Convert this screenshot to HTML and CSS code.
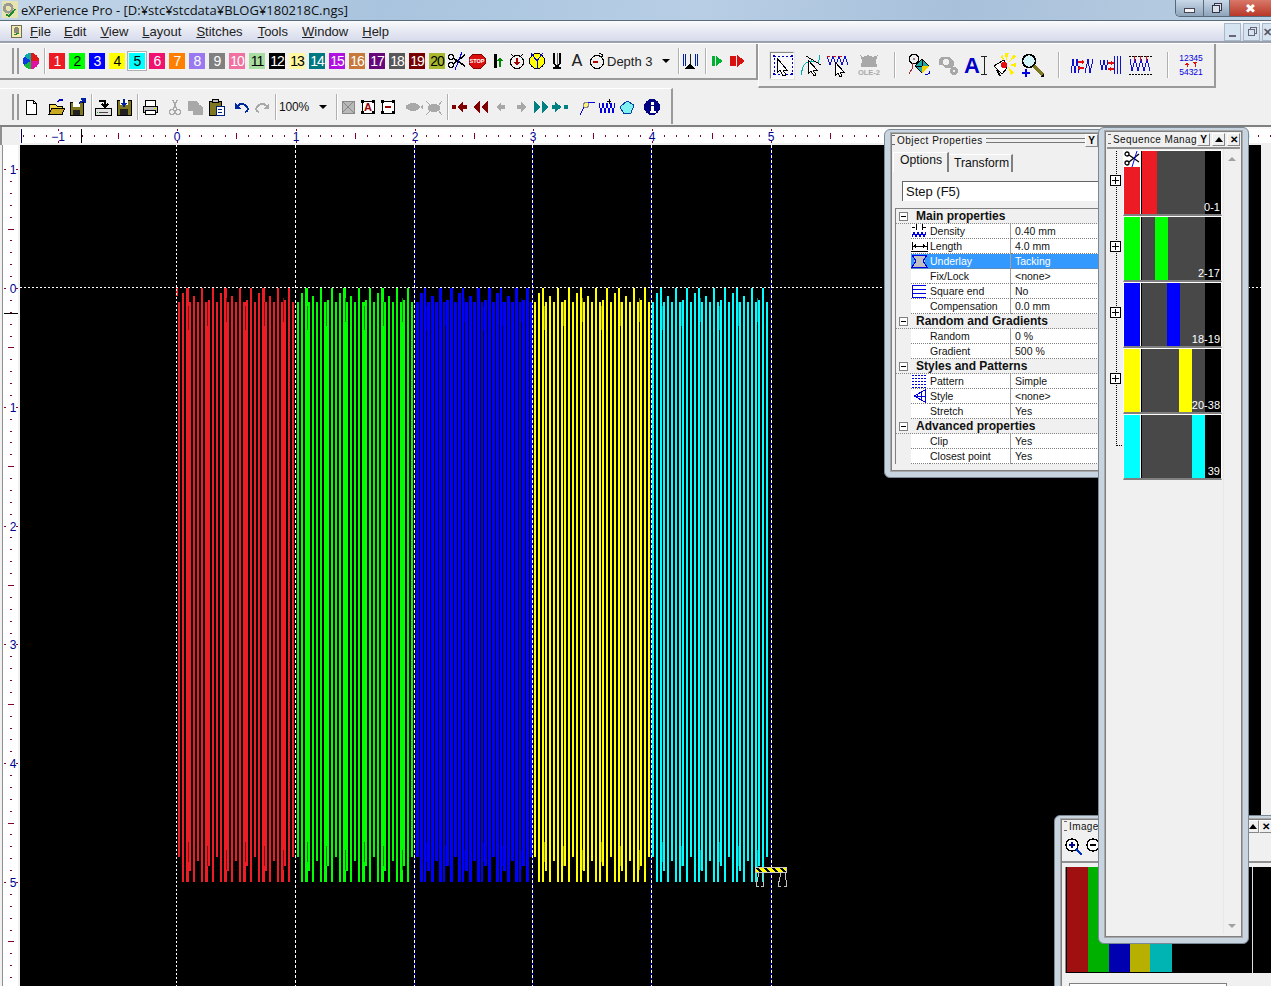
FILE: index.html
```html
<!DOCTYPE html>
<html lang="en">
<head>
<meta charset="utf-8">
<title>eXPerience Pro</title>
<link rel="stylesheet" href="styles.css">
</head>
<body>
<div class="app">
  <header class="titlebar">
    <svg class="ic title-ic" viewBox="0 0 20 20"><rect x="1" y="0" width="18" height="19" fill="#e8e4b0"/><circle cx="8" cy="8" r="6" fill="#9a9a90"/><circle cx="8" cy="8" r="3" fill="#e8e4b0"/><path d="M6 15l3 2 7-8" fill="none" stroke="#1a8a30" stroke-width="2"/></svg>
    <span class="title-text">eXPerience Pro - [D:¥stc¥stcdata¥BLOG¥180218C.ngs]</span>
    <div class="caption">
      <div class="cap cap-min"><span class="glyph-min"></span></div>
      <div class="cap cap-max"><span class="glyph-max"></span></div>
      <div class="cap cap-close">✖</div>
    </div>
  </header>
  <nav class="menubar">
    <svg class="ic menu-ic" viewBox="0 0 20 20"><rect x="3" y="2" width="14" height="17" fill="#f4eca8" stroke="#444"/><circle cx="10" cy="9" r="4" fill="#8a8a80"/><path d="M7 15l6-2" stroke="#1a8a30" stroke-width="2"/></svg>
    <span class="menu-item menu-first"><u>F</u>ile</span>
    <span class="menu-item"><u>E</u>dit</span>
    <span class="menu-item"><u>V</u>iew</span>
    <span class="menu-item menu-wide"><u>L</u>ayout</span>
    <span class="menu-item menu-wide"><u>S</u>titches</span>
    <span class="menu-item"><u>T</u>ools</span>
    <span class="menu-item"><u>W</u>indow</span>
    <span class="menu-item"><u>H</u>elp</span>
    <div class="mdi">
      <div class="mdi-btn"><span class="mdi-min"></span></div>
      <div class="mdi-btn"><span class="mdi-res"></span></div>
      <div class="mdi-btn mdi-cut">✕</div>
    </div>
  </nav>
  <section class="toolarea">
    <div class="toolcol">
      <div class="toolbar tb1">
        <span class="grip"></span>
        <svg class="ic m2" viewBox="0 0 20 20"><circle cx="10" cy="10" r="8" fill="#0a3ae0"/><path d="M10 10V2A8 8 0 0 1 18 10Z" fill="#e01818"/><path d="M10 10H18A8 8 0 0 1 10 18Z" fill="#e010a0"/><path d="M10 10V18A8 8 0 0 1 3 14Z" fill="#18b838"/><path d="M10 10L3 5A8 8 0 0 1 10 2Z" fill="#10a8a8"/></svg>
        <span class="sep m3"></span>
        <div class="swatches">
          <span class="sw s1">1</span><span class="sw s2">2</span><span class="sw s3">3</span><span class="sw s4">4</span><span class="sw s5">5</span><span class="sw s6">6</span><span class="sw s7">7</span><span class="sw s8">8</span><span class="sw s9">9</span><span class="sw s10">10</span><span class="sw s11">11</span><span class="sw s12">12</span><span class="sw s13">13</span><span class="sw s14">14</span><span class="sw s15">15</span><span class="sw s16">16</span><span class="sw s17">17</span><span class="sw s18">18</span><span class="sw s19">19</span><span class="sw s20">20</span>
        </div>
        <svg class="ic m2" viewBox="0 0 20 20"><g fill="none" stroke="#000" stroke-width="1.5"><circle cx="4" cy="6" r="2.5"/><circle cx="4" cy="14" r="2.5"/><path d="M6 7l12 8M6 13L18 4"/></g><path d="M15 1L8 19" stroke="#00f"/></svg>
        <svg class="ic" viewBox="0 0 20 20"><path d="M6 3h8l4 4v6l-4 4H6l-4-4V7z" fill="#d81010" stroke="#800"/><text x="10" y="12" class="stop-t">STOP</text></svg>
        <svg class="ic" viewBox="0 0 20 20"><path d="M8 3v14" stroke="#000" stroke-width="3"/><path d="M13 9v7" stroke="#080" stroke-width="2"/><path d="M10 10l3-4 3 4z" fill="#080"/></svg>
        <svg class="ic" viewBox="0 0 20 20"><circle cx="10" cy="11" r="6.5" fill="#f0f0f0" stroke="#000"/><path d="M10 7v5" stroke="#a00000" stroke-width="2"/><path d="M7 11h6l-3 4z" fill="#a00000"/><path d="M4 3l2 2M16 3l-2 2" stroke="#000"/></svg>
        <svg class="ic" viewBox="0 0 20 20"><circle cx="10" cy="10" r="7.5" fill="#ffff00" stroke="#000"/><path d="M4 2l6 8 6-8M10 10v8" fill="none" stroke="#0000e0"/></svg>
        <svg class="ic" viewBox="0 0 20 20"><path d="M7 2v10l2 3h2l2-3V2" fill="none" stroke="#000" stroke-width="1.5"/><path d="M10 2v12" stroke="#666"/><path d="M6 17h8" stroke="#000" stroke-width="2"/></svg>
        <svg class="ic" viewBox="0 0 20 20"><text x="10" y="15" class="a-t">A</text></svg>
        <svg class="ic" viewBox="0 0 20 20"><circle cx="10" cy="11" r="6.5" fill="#f0f0f0" stroke="#000"/><path d="M6 11h5" stroke="#b00000" stroke-width="2"/><path d="M12 2l4 2-2 3" fill="none" stroke="#000"/></svg>
        <span class="depth">Depth 3</span>
        <span class="caret m10"></span>
        <span class="sep m8"></span>
        <svg class="ic" viewBox="0 0 20 20"><path d="M3 3v12M5 3v12M15 3v12M17 3v12" stroke="#0020a0"/><path d="M10 3v10" stroke="#222"/><path d="M5 18l5-6 5 6z" fill="#000"/></svg>
        <span class="sep m5"></span>
        <svg class="ic" viewBox="0 0 20 20"><path d="M5 5h3v10H5z" fill="#00b030"/><path d="M9 5l7 5-7 5z" fill="#00b030"/></svg>
        <svg class="ic" viewBox="0 0 20 20"><path d="M3 5h6v10H3z" fill="#d81010"/><path d="M10 4l8 6-8 6z" fill="#d81010"/></svg>
      </div>
      <div class="toolbar tb2">
        <span class="grip"></span>
        <svg class="ic m2" viewBox="0 0 20 20"><path d="M5 3h7l3 3v11H5z" fill="#fff" stroke="#000"/><path d="M12 3v3h3" fill="none" stroke="#000"/></svg>
        <svg class="ic m6" viewBox="0 0 20 20"><path d="M2 7h6l2 2h5v8H2z" fill="#f0d850" stroke="#000"/><path d="M2 17l3-6h13l-3 6z" fill="#c8a820" stroke="#000"/><path d="M10 5q3-3 6-2" fill="none" stroke="#0000c0" stroke-width="1.5"/></svg>
        <svg class="ic" viewBox="0 0 20 20"><path d="M3 5h13v13H3z" fill="#807820" stroke="#000"/><rect x="6" y="5" width="7" height="5" fill="#fff"/><rect x="6" y="13" width="7" height="5" fill="#202020"/><path d="M12 6l6-3M14 2h4v4" fill="none" stroke="#0020a0" stroke-width="1.5"/></svg>
        <span class="sep m4"></span>
        <svg class="ic" viewBox="0 0 20 20"><rect x="2" y="11" width="16" height="7" fill="#e0e0e0" stroke="#000"/><path d="M6 15h9" stroke="#444"/><path d="M4 15h1" stroke="#0a0"/><path d="M6 4h6v5M9 7l3 3 3-3" fill="none" stroke="#000" stroke-width="1.5"/></svg>
        <svg class="ic m1" viewBox="0 0 20 20"><path d="M3 3h14v15H3z" fill="#807820" stroke="#000"/><rect x="6" y="3" width="8" height="5" fill="#fff"/><rect x="6" y="12" width="8" height="6" fill="#202020"/><path d="M10 2v6M8 6l2 3 2-3" fill="none" stroke="#0020a0" stroke-width="1.5"/></svg>
        <span class="sep m3"></span>
        <svg class="ic m1" viewBox="0 0 20 20"><path d="M5 3h10v6H5z" fill="#fff" stroke="#000"/><path d="M3 9h14v6H3z" fill="#c0c0c0" stroke="#000"/><path d="M5 13h10v4H5z" fill="#fff" stroke="#000"/><path d="M14 11h2" stroke="#dd0"/></svg>
        <svg class="ic m5" viewBox="0 0 20 20"><g fill="none" stroke="#a8a8a8" stroke-width="1.5"><circle cx="7" cy="15" r="2.5"/><circle cx="13" cy="15" r="2.5"/><path d="M8 13L12 3M12 13L8 3"/></g></svg>
        <svg class="ic" viewBox="0 0 20 20"><path d="M3 4h8l3 3v7H3z" fill="#a8a8a8"/><path d="M8 8h7l3 3v7H8z" fill="#a8a8a8"/></svg>
        <svg class="ic m1" viewBox="0 0 20 20"><rect x="3" y="4" width="12" height="14" fill="#807820" stroke="#000"/><rect x="6" y="2" width="6" height="3" fill="#c0c0c0" stroke="#000"/><path d="M10 9h8v9h-8z" fill="#fff" stroke="#002080"/><path d="M12 12h4M12 15h4" stroke="#002080"/></svg>
        <svg class="ic m6" viewBox="0 0 20 20"><path d="M5 9q5-4 9 0t-1 6" fill="none" stroke="#0028a0" stroke-width="2"/><path d="M3 6v6h6z" fill="#0028a0"/></svg>
        <svg class="ic" viewBox="0 0 20 20"><path d="M15 9q-5-4-9 0t1 6" fill="none" stroke="#a8a8a8" stroke-width="2"/><path d="M17 6v6h-6z" fill="#a8a8a8"/></svg>
        <span class="sep m3"></span>
        <span class="zoomtxt">100%</span>
        <span class="caret m12"></span>
        <span class="sep m9"></span>
        <svg class="ic" viewBox="0 0 20 20"><rect x="4" y="4" width="12" height="12" fill="#b8b8b8" stroke="#888"/><path d="M4 4l12 12M16 4L4 16" stroke="#888"/></svg>
        <svg class="ic" viewBox="0 0 20 20"><rect x="4" y="4" width="12" height="12" fill="#fff" stroke="#000"/><path d="M3 3h3v3H3zM14 3h3v3h-3zM3 14h3v3H3zM14 14h3v3h-3z"/><text x="10" y="14" class="ra-t">A</text></svg>
        <svg class="ic" viewBox="0 0 20 20"><rect x="4" y="4" width="12" height="12" fill="#fff" stroke="#000"/><path d="M3 3h3v3H3zM14 3h3v3h-3zM3 14h3v3H3zM14 14h3v3h-3z"/><path d="M7 10h6" stroke="#900" stroke-width="2"/></svg>
        <svg class="ic m6" viewBox="0 0 20 20"><ellipse cx="9" cy="10" rx="7" ry="4" fill="#a8a8a8"/><path d="M16 10l3-2v4z" fill="#a8a8a8"/></svg>
        <svg class="ic" viewBox="0 0 20 20"><ellipse cx="10" cy="11" rx="6" ry="4" fill="#a8a8a8"/><path d="M2 4l5 5M18 4l-4 5M2 18l5-5M18 18l-4-5" stroke="#a8a8a8"/></svg>
        <span class="sep m3"></span>
        <svg class="ic m1" viewBox="0 0 20 20"><circle cx="4" cy="10" r="2.5" fill="#800000"/><path d="M7 10l6-5v3h4v4h-4v3z" fill="#800000"/></svg>
        <svg class="ic m1" viewBox="0 0 20 20"><path d="M2 10l7-6v12zM10 10l7-6v12z" fill="#800000"/></svg>
        <svg class="ic" viewBox="0 0 20 20"><path d="M5 10l5-5v3h4v4h-4v3z" fill="#a8a8a8"/></svg>
        <svg class="ic" viewBox="0 0 20 20"><path d="M15 10l-5-5v3H6v4h4v3z" fill="#a8a8a8"/></svg>
        <svg class="ic" viewBox="0 0 20 20"><path d="M3 4l7 6-7 6zM11 4l7 6-7 6z" fill="#008080"/></svg>
        <svg class="ic" viewBox="0 0 20 20"><path d="M1 8h3V5l7 5-7 5v-3H1z" fill="#008080"/><circle cx="15" cy="10" r="2.5" fill="#008080"/></svg>
        <svg class="ic m6" viewBox="0 0 20 20"><path d="M3 18l4-8M11 6l7-1" stroke="#0000e0"/><circle cx="9" cy="8" r="2.5" fill="#fff080" stroke="#888"/></svg>
        <svg class="ic" viewBox="0 0 20 20"><path d="M2 6l2 10 2-10 2 10 2-10 2 10 2-10 2 10 2-10" fill="none" stroke="#0000e0"/><path d="M12 2v5M10 4h4" stroke="#000"/></svg>
        <svg class="ic" viewBox="0 0 20 20"><path d="M3 10l7-6 7 4-3 8-7 1z" fill="#80f0f0" stroke="#0040a0"/></svg>
        <svg class="ic m5" viewBox="0 0 20 20"><circle cx="10" cy="10" r="8" fill="#000080"/><rect x="9" y="8.5" width="3" height="6" fill="#fff"/><rect x="9" y="4.5" width="3" height="3" fill="#fff"/><rect x="7.5" y="14" width="6" height="1.5" fill="#fff"/></svg>
      </div>
    </div>
    <div class="toolbar tb3">
      <div class="tool-active">
        <svg class="ic24" viewBox="0 0 24 24"><rect x="3" y="3" width="18" height="18" fill="#f8f8f8" stroke="#0000c0" stroke-dasharray="2 2"/><path d="M2 2h2v2H2zM20 2h2v2h-2zM2 20h2v2H2zM20 20h2v2h-2z" fill="#0000c0"/><path d="M6 5v15l3-3 3 6 3-1-3-5h4z" fill="#fff" stroke="#000"/></svg>
      </div>
      <svg class="ic24 m6" viewBox="0 0 24 24"><path d="M2 22q-1-8 4-12t12 0q2-4 2-8" fill="none" stroke="#00b0b0"/><path d="M6 3L21 12" stroke="#000"/><path d="M8 7v14l3-3 3 5 2-1-3-5h4z" fill="#fff" stroke="#000"/></svg>
      <svg class="ic24 m2" viewBox="0 0 24 24"><path d="M1 3l3 9 3-9 3 9 3-9 3 9 3-9 3 9" fill="none" stroke="#1010d0"/><path d="M1 3h3M7 3h3M13 3h3" stroke="#d01010"/><path d="M9 9v14l3-3 2 4 2-1-2-4h4z" fill="#fff" stroke="#000"/></svg>
      <svg class="ic24 m7" viewBox="0 0 24 24"><path d="M3 2l3 2 5-2 5 2 5-2-2 5 1 7H4l1-7z" fill="#a8a8a8"/><text x="12" y="22" class="ole-t">OLE-2</text></svg>
      <span class="sep m13"></span>
      <svg class="ic24 m12" viewBox="0 0 24 24"><circle cx="6" cy="6" r="4.5" fill="#eee" stroke="#000" stroke-width="1.5"/><circle cx="6" cy="6" r="1.5" fill="#888"/><path d="M4 10v6l-3 5" fill="none" stroke="#a03030"/><path d="M14 6l7 7-7 7-7-7z" fill="#20a8a8" stroke="#000"/><path d="M14 6v14M7 13h14" stroke="#000"/><path d="M14 13h7l-7 7z" fill="#f0d000"/><path d="M17 21q5 1 5-3" fill="none" stroke="#0000d0"/></svg>
      <svg class="ic24 m4" viewBox="0 0 24 24"><path d="M5 4h9l2 3 2 1v4l-3 3H9l-3-3H3V7z" fill="#a8a8a8"/><circle cx="10" cy="9" r="3" fill="#f0f0f0"/><circle cx="18" cy="18" r="4" fill="#a8a8a8"/><circle cx="18" cy="18" r="1.5" fill="#f0f0f0"/></svg>
      <svg class="ic24 m4" viewBox="0 0 24 24"><text x="8" y="20" class="ai-a">A</text><path d="M17 3h6M20 3v18M17 21h6" stroke="#222" fill="none"/></svg>
      <svg class="ic24 m4" viewBox="0 0 24 24"><path d="M13 0l4 0-3 8zM22 1l2 3-7 5zM24 10v4l-7-2zM22 20l-3 2-3-8zM8 4l3-2 1 6z" fill="#ffee00"/><path d="M2 13l10-6 3 8-5 6z" fill="#fff" stroke="#000"/><circle cx="12" cy="12" r="3" fill="#e81010"/><path d="M5 17l3 6" stroke="#000" stroke-width="2"/></svg>
      <svg class="ic24 m4" viewBox="0 0 24 24"><circle cx="9" cy="8" r="6.5" fill="#d0f4f8" stroke="#000" stroke-width="1.5"/><path d="M14 13l9 9" stroke="#807820" stroke-width="3"/><path d="M20 24l4-4v4z"/><path d="M2 20h8M6 16v8" stroke="#0000e0" stroke-width="2"/></svg>
      <span class="sep m14"></span>
      <svg class="ic24 m10" viewBox="0 0 24 24"><path d="M1 20l2-14 2 14 2-14 2 14M15 20l3-14 2 14 3-14" fill="none" stroke="#1010d0"/><path d="M8 9h6M14 15H8" stroke="#e01010" stroke-width="1.5"/><path d="M12 7l3 2-3 2zM10 13l-3 2 3 2z" fill="#e01010"/></svg>
      <svg class="ic24 m5" viewBox="0 0 24 24"><path d="M1 7l2 10 2-10 2 10 2-10M15 3v18M18 3v18M21 3v18" fill="none" stroke="#1010d0"/><path d="M9 10h6M15 16H9" stroke="#e01010" stroke-width="1.5"/><path d="M12 8l3 2-3 2zM12 14l-3 2 3 2z" fill="#e01010"/></svg>
      <svg class="ic24 m5" viewBox="0 0 24 24"><path d="M1 3h23M1 21h23" stroke="#000" stroke-dasharray="2 1"/><path d="M2 6l2 12 3-12 3 12 3-12 3 12 3-12 3 12" fill="none" stroke="#1010d0"/><path d="M6 3v5M12 3v5M18 3v5" stroke="#e01010"/></svg>
      <span class="sep m15"></span>
      <svg class="ic24 m10" viewBox="0 0 24 24"><text x="12" y="8" class="num-t">12345</text><text x="12" y="22" class="num-t">54321</text><path d="M8 9l2 3H6zM16 12l2-3h-4z" fill="#e01010"/><path d="M8 11v3M16 10v4" stroke="#e01010"/></svg>
    </div>
  </section>
  <section class="ruler-row">
    <div class="ruler-corner"></div>
    <svg class="ruler-h" id="rulerH" viewBox="20 127 1251 18"></svg>
  </section>
  <main class="work">
    <svg class="ruler-v" id="rulerV" viewBox="0 145 20 841"></svg>
    <svg class="canvas" id="canvas" viewBox="20 145 1251 841"></svg>
  </main>

  <aside class="sidebar-strip"></aside>

  <aside class="win win-image">
    <div class="win-in">
      <div class="wt">
        <span class="wt-grip"></span><span class="wt-text">Image M</span>
        <span class="wt-btn wt-up"></span><span class="wt-btn wt-x">✕</span>
      </div>
      <div class="img-tools">
        <svg class="ic" viewBox="0 0 20 20"><circle cx="8" cy="8" r="6" fill="#fff" stroke="#000" stroke-width="1.4"/><path d="M5 8h6M8 5v6" stroke="#000090" stroke-width="1.4"/><path d="M12 12l6 6" stroke="#0030c0" stroke-width="2.4"/></svg>
        <svg class="ic" viewBox="0 0 20 20"><circle cx="8" cy="8" r="6" fill="#fff" stroke="#000" stroke-width="1.4"/><path d="M5 8h6" stroke="#000" stroke-width="1.4"/></svg>
      </div>
      <div class="img-view">
        <span class="iv iv1"></span><span class="iv iv2"></span><span class="iv iv3"></span><span class="iv iv4"></span><span class="iv iv5"></span>
        <span class="iv-mark"></span>
      </div>
      <div class="img-slider"></div>
    </div>
  </aside>

  <aside class="win win-props">
    <div class="win-in">
      <div class="wt wt-props">
        <span class="wt-grip"></span><span class="wt-text">Object Properties</span><span class="wt-lines"></span>
        <span class="wt-btn wt-pin">Y</span>
      </div>
      <div class="tabs"><span class="tab tab-on">Options</span><span class="tab">Transform</span></div>
      <div class="stepbox">Step (F5)</div>
      <div class="grid">
        <div class="row sec"><span class="minus"></span><b>Main properties</b></div>
        <div class="row"><span class="pi"><svg viewBox="0 0 17 14"><path d="M5 0v6M11 0v6M1 3h3M15 3h-3" stroke="#000"/><path d="M1 13l2-5 2 5 2-5 2 5 2-5 2 5 2-5" fill="none" stroke="#0000e0"/></svg></span><span class="pn">Density</span><span class="pv">0.40 mm</span></div>
        <div class="row"><span class="pi"><svg viewBox="0 0 17 14"><path d="M1 3v8M16 3v8M1 7h15" stroke="#000"/><path d="M2 7l3-2v4zM15 7l-3-2v4z"/><path d="M0 12h17" stroke="#000"/></svg></span><span class="pn">Length</span><span class="pv">4.0 mm</span></div>
        <div class="row row-sel"><span class="pi"><svg viewBox="0 0 17 14"><rect x="3" y="2" width="11" height="10" fill="#a8c8f0"/><path d="M1 1h15L12 7l4 6H1l4-6z" fill="#c0c0c0" stroke="#0000e0"/></svg></span><span class="pn">Underlay</span><span class="pv">Tacking</span></div>
        <div class="row"><span class="pi"></span><span class="pn">Fix/Lock</span><span class="pv">&lt;none&gt;</span></div>
        <div class="row"><span class="pi"><svg viewBox="0 0 17 14"><path d="M1 1h14M1 5h14M1 9h14M1 13h14" stroke="#0000e0"/><path d="M1 1v12" stroke="#0000e0"/></svg></span><span class="pn">Square end</span><span class="pv">No</span></div>
        <div class="row"><span class="pi"></span><span class="pn">Compensation</span><span class="pv">0.0 mm</span></div>
        <div class="row sec"><span class="minus"></span><b>Random and Gradients</b></div>
        <div class="row"><span class="pi"></span><span class="pn">Random</span><span class="pv">0 %</span></div>
        <div class="row"><span class="pi"></span><span class="pn">Gradient</span><span class="pv">500 %</span></div>
        <div class="row sec"><span class="minus"></span><b>Styles and Patterns</b></div>
        <div class="row"><span class="pi"><svg viewBox="0 0 17 14"><path d="M1 1h15M1 4h15M1 7h15M1 10h15M1 13h15" stroke="#0000e0" stroke-dasharray="2 1"/></svg></span><span class="pn">Pattern</span><span class="pv">Simple</span></div>
        <div class="row"><span class="pi"><svg viewBox="0 0 17 14"><path d="M3 7l11-6v12z" fill="#fff" stroke="#0000e0"/><path d="M3 7h11M6 5v4M10 3v8" stroke="#0000e0"/></svg></span><span class="pn">Style</span><span class="pv">&lt;none&gt;</span></div>
        <div class="row"><span class="pi"></span><span class="pn">Stretch</span><span class="pv">Yes</span></div>
        <div class="row sec"><span class="minus"></span><b>Advanced properties</b></div>
        <div class="row"><span class="pi"></span><span class="pn">Clip</span><span class="pv">Yes</span></div>
        <div class="row"><span class="pi"></span><span class="pn">Closest point</span><span class="pv">Yes</span></div>
      </div>
    </div>
  </aside>

  <aside class="win win-seq">
    <div class="win-in">
      <div class="wt wt-seq">
        <span class="wt-grip"></span><span class="wt-text wt-cut">Sequence Manag</span>
        <span class="wt-btn wt-pin">Y</span><span class="wt-btn wt-up"></span><span class="wt-btn wt-x">✕</span>
      </div>
      <div class="seq-body">
        <div class="tree-line"></div>
        <div class="seq-list">
          <div class="seq-row"><span class="plus"></span>
            <div class="thumb"><span class="t-strip tc-r"><span class="t-sc"><svg viewBox="0 0 16 16"><g fill="none" stroke="#000" stroke-width="1.3"><circle cx="3" cy="3" r="2"/><circle cx="3" cy="12" r="2"/><path d="M5 4l10 7M5 11l10-8"/></g><path d="M13 0L8 16" stroke="#00f"/></svg></span></span><span class="t-gap"></span><span class="t-bar tc-r t-b1"></span><span class="t-label">0-1</span></div></div>
          <div class="seq-row"><span class="plus"></span>
            <div class="thumb"><span class="t-strip tc-g"></span><span class="t-gap"></span><span class="t-bar tc-g t-b2"></span><span class="t-label">2-17</span></div></div>
          <div class="seq-row"><span class="plus"></span>
            <div class="thumb"><span class="t-strip tc-b"></span><span class="t-gap"></span><span class="t-bar tc-b t-b3"></span><span class="t-label">18-19</span></div></div>
          <div class="seq-row"><span class="plus"></span>
            <div class="thumb"><span class="t-strip tc-y"></span><span class="t-gap"></span><span class="t-bar tc-y t-b4"></span><span class="t-label">20-38</span></div></div>
          <div class="seq-row"><span class="noplus"></span>
            <div class="thumb"><span class="t-strip tc-c"></span><span class="t-gap"></span><span class="t-bar tc-c t-b5"></span><span class="t-label">39</span></div></div>
        </div>
        <div class="seq-scroll"><span class="arr-up"></span><span class="arr-down"></span></div>
      </div>
    </div>
  </aside>
</div>
<script src="app.js"></script>
</body>
</html>
```
FILE: styles.css
```css
* { box-sizing: border-box; }
html, body { margin: 0; padding: 0; background: #f0f0f0; }
body { width: 1271px; height: 986px; overflow: hidden; font-family: "Liberation Sans", Arial, sans-serif; font-size: 12px; color: #111; }
.app { position: relative; width: 1271px; height: 986px; overflow: hidden; display: flex; flex-direction: column; }
.ic { width: 20px; height: 20px; flex: none; display: block; shape-rendering: crispEdges; }
.ic24 { width: 24px; height: 24px; flex: none; display: block; shape-rendering: crispEdges; }

.titlebar { height: 21px; flex: none; display: flex; align-items: center; background: linear-gradient(100deg, #c4d6e8 0%, #a9c4de 30%, #b7cee5 55%, #a8c0da 75%, #b8cee2 100%); border-bottom: 1px solid #5a6b7a; position: relative; }
.title-ic { width: 18px; height: 18px; margin-left: 1px; }
.title-text { margin-left: 2px; font-size: 13px; font-family: "Open Sans", "Liberation Sans", sans-serif; color: #111; white-space: nowrap; }
.caption { position: absolute; left: 1175px; top: 0; width: 96px; height: 17px; display: flex; border: 1px solid #56687a; border-top: 0; border-right: 0; border-bottom-left-radius: 5px; overflow: hidden; }
.cap { display: flex; align-items: center; justify-content: center; height: 100%; }
.cap-min { width: 28px; background: linear-gradient(#c8d8e8, #8ea4ba); border-right: 1px solid #5a6b7a; }
.cap-max { width: 26px; background: linear-gradient(#c8d8e8, #8ea4ba); border-right: 1px solid #5a6b7a; }
.cap-close { flex: 1; background: linear-gradient(#d87868, #b83828); color: #fff; font-size: 13px; }
.glyph-min { width: 11px; height: 5px; background: #f4f4f4; border: 1px solid #445; margin-top: 5px; }
.glyph-max { width: 8px; height: 8px; margin: 2px 2px 0 0; background: #d8e0e8; border: 1px solid #334; box-shadow: 2px -2px 0 -1px #dde, 2px -2px 0 0 #334; }

.menubar { height: 22px; flex: none; display: flex; align-items: center; gap: 14px; position: relative; padding-left: 9px; background: linear-gradient(#fbfbfd 0%, #eef0f6 30%, #d6dbec 100%); border-bottom: 2px solid #9aa0ac; font-size: 13px; color: #222; }
.menu-ic { width: 15px; height: 16px; margin-right: -8px; }
.menu-item { white-space: nowrap; }
.menu-first { margin-right: -1px; }
.menu-wide { margin-right: 1px; }
.mdi { position: absolute; left: 1224px; top: 2px; display: flex; gap: 2px; }
.mdi-btn { width: 17px; height: 18px; background: #d6e4f2; border: 1px solid #a8b8c8; display: flex; align-items: center; justify-content: center; color: #556; font-size: 11px; font-weight: bold; }
.mdi-min { width: 7px; height: 2px; background: #667; margin-top: 7px; }
.mdi-res { width: 7px; height: 7px; border: 1px solid #667; box-shadow: 2px -2px 0 -1px #d6e4f2, 2px -2px 0 0 #667; }
.mdi-cut { width: 12px; justify-content: flex-start; }

.toolarea { height: 82px; flex: none; display: flex; align-items: flex-start; background: #f0f0f0; border-top: 1px solid #fff; }
.toolcol { width: 758px; flex: none; display: flex; flex-direction: column; gap: 8px; }
.toolbar { display: flex; align-items: center; background: #f0f0f0; padding-left: 12px; }
.tb1 { width: 758px; height: 36px; border-right: 2px solid #9a9a9a; border-bottom: 2px solid #9a9a9a; }
.tb2 { width: 673px; height: 36px; border-right: 2px solid #9a9a9a; border-top: 1px solid #fff; }
.tb3 { width: 458px; height: 44px; padding-left: 11px; border-right: 2px solid #9a9a9a; border-bottom: 2px solid #9a9a9a; border-left: 1px solid #fff; }
.grip { width: 7px; height: 26px; flex: none; border-left: 2px solid #9a9a9a; border-right: 2px solid #9a9a9a; }
.sep { width: 2px; height: 26px; flex: none; background: #b0b0b0; border-right: 1px solid #fff; }
.m1 { margin-left: 1px; } .m2 { margin-left: 2px; } .m3 { margin-left: 3px; } .m4 { margin-left: 4px; } .m5 { margin-left: 5px; } .m6 { margin-left: 6px; } .m7 { margin-left: 7px; } .m8 { margin-left: 8px; } .m9 { margin-left: 9px; } .m10 { margin-left: 10px; } .m12 { margin-left: 12px; } .m13 { margin-left: 13px; } .m14 { margin-left: 14px; } .m15 { margin-left: 15px; }

.swatches { display: flex; gap: 4px; margin-left: 3px; }
.sw { width: 16px; height: 16px; flex: none; font-size: 14px; line-height: 17px; text-align: center; letter-spacing: -1px; color: #fff; }
.s1 { background: #ed1c24; } .s2 { background: #00ff00; color: #000; } .s3 { background: #0000ff; } .s4 { background: #ffff00; color: #000; }
.s5 { background: #00ffff; color: #000; outline: 1px solid #fff; box-shadow: 0 0 0 2px #b0b0b0; }
.s6 { background: #f0106e; } .s7 { background: #ff8000; } .s8 { background: #9a78f0; } .s9 { background: #808080; } .s10 { background: #f070a0; }
.s11 { background: #a8dca0; color: #000; } .s12 { background: #000; } .s13 { background: #fff8a0; color: #000; } .s14 { background: #007880; } .s15 { background: #b010e0; }
.s16 { background: #c87838; } .s17 { background: #680878; } .s18 { background: #585858; } .s19 { background: #780000; } .s20 { background: #a8b830; color: #000; }

.stop-t { font: bold 5.6px "Liberation Sans", sans-serif; fill: #fff; text-anchor: middle; }
.a-t { font: 16px "DejaVu Sans", sans-serif; fill: #222; text-anchor: middle; }
.ra-t { font: bold 11px "Liberation Sans", sans-serif; fill: #900; text-anchor: middle; }
.ole-t { font: bold 7.5px "Liberation Sans", sans-serif; fill: #a8a8a8; text-anchor: middle; }
.ai-a { font: bold 22px "Liberation Sans", sans-serif; fill: #0000c8; text-anchor: middle; }
.num-t { font: 8.5px "Liberation Sans", sans-serif; fill: #0000e0; text-anchor: middle; }
.depth { font-size: 13px; width: 45px; flex: none; white-space: nowrap; color: #222; }
.zoomtxt { font-size: 12px; width: 28px; margin-left: 2px; flex: none; letter-spacing: -0.2px; }
.caret { width: 0; height: 0; flex: none; border-left: 4px solid transparent; border-right: 4px solid transparent; border-top: 4px solid #000; }
.tool-active { width: 24px; height: 27px; flex: none; display: flex; align-items: center; background: #f8f8f8; border: 1px solid #888; border-right-color: #fff; border-bottom-color: #fff; box-shadow: 0 0 0 1px #e4e4e4; }

.ruler-row { height: 20px; flex: none; display: flex; background: #f0f0f0; border-top: 2px solid #808080; }
.ruler-corner { width: 20px; flex: none; background: #f0f0f0; border-left: 2px solid #909090; }
.ruler-h { width: 1251px; height: 18px; display: block; flex: none; background: #fff; }
.work { flex: 1; display: flex; min-height: 0; }
.ruler-v { width: 20px; height: 841px; display: block; flex: none; background: #fff; }
.canvas { width: 1251px; height: 841px; display: block; flex: none; background: #000; }

.sidebar-strip { position: absolute; left: 1261px; top: 145px; width: 10px; height: 670px; background: #f0f0f0; z-index: 1; }
.win { position: absolute; background: #c8d4e0; border: 1px solid #7c8894; border-radius: 6px; padding: 3px 6px 6px; }
.win-in { width: 100%; height: 100%; background: #f0f0f0; border: 1px solid #808080; box-shadow: 0 0 0 1px #a8a8a8; display: flex; flex-direction: column; }
.win-image { left: 1054px; top: 815px; width: 240px; height: 190px; z-index: 2; }
.win-props { left: 884px; top: 129px; width: 240px; height: 349px; z-index: 3; }
.win-seq { left: 1098px; top: 127px; width: 151px; height: 817px; z-index: 4; }

.wt { height: 12px; flex: none; display: flex; align-items: center; padding-left: 2px; font-size: 10px; letter-spacing: 0.5px; position: relative; color: #111; }
.wt-grip { width: 3px; height: 10px; flex: none; border-top: 1px solid #666; border-bottom: 1px solid #666; margin-right: 2px; }
.wt-text { white-space: nowrap; }
.wt-props { padding-left: 0; }
.wt-lines { width: 102px; flex: none; height: 5px; margin-left: 3px; border-top: 1px solid #777; border-bottom: 1px solid #777; }
.wt-btn { width: 13px; height: 13px; flex: none; display: flex; align-items: center; justify-content: center; background: #f0f0f0; border: 1px solid #fff; border-right-color: #888; border-bottom-color: #888; font-size: 10px; font-weight: bold; letter-spacing: 0; color: #000; }
.win-props .wt-pin { position: absolute; left: 193px; top: 0; }
.wt-up::before { content: ""; border-left: 4px solid transparent; border-right: 4px solid transparent; border-bottom: 5px solid #000; }
.wt-seq { padding-right: 2px; margin-top: 1px; }
.wt-cut { width: 82px; flex: none; letter-spacing: 0.4px; }
.wt-seq .wt-btn { margin-left: 2px; }
.win-image .wt-text { width: 177px; flex: none; letter-spacing: 0.4px; }

.tabs { display: flex; height: 20px; flex: none; margin: 6px 0 0 1px; align-items: flex-end; font-size: 12.2px; }
.tab { height: 18px; padding: 1px 4px 0 5px; width: 64px; white-space: nowrap; border-right: 2px solid #808080; border-top: 1px solid #fff; }
.tab-on { height: 20px; width: 56px; padding: 0 0 0 6px; border-left: 1px solid #fff; }
.stepbox { width: 260px; height: 20px; flex: none; margin: 9px 0 0 10px; background: #fff; border-left: 1px solid #666; border-top: 1px solid #666; padding: 3px 0 0 3px; font-size: 13px; line-height: 14px; }
.grid { width: 260px; margin: 7px 0 0 3px; border-left: 1px solid #808080; border-top: 1px solid #808080; font-size: 10.5px; flex: none; }
.row { height: 15px; display: flex; align-items: center; padding-left: 15px; background-color: #f0f0f0; }
.row > * { height: 15px; line-height: 14px; border-bottom: 1px dotted #808080; background: #fff; }
.row.sec { padding-left: 0; background: #f0f0f0; border-bottom: 1px dotted #888; }
.row.sec > * { background: none; border: 0; }
.row.sec b { margin-left: 8px; height: 14px; font-size: 12px; white-space: nowrap; }
.row.sec .minus { width: 9px; height: 9px; margin-left: 3px; flex: none; position: relative; border: 1px solid #808080; background: #fff; }
.minus::after { content: ""; position: absolute; left: 1px; top: 3px; width: 5px; height: 1px; background: #000; }
.pi { width: 19px; flex: none; display: block; }
.pi svg { width: 17px; height: 14px; display: block; shape-rendering: crispEdges; }
.pn { width: 81px; flex: none; white-space: nowrap; border-right: 1px solid #a0a0a0; }
.pv { flex: 1; padding-left: 4px; white-space: nowrap; }
.row-sel .pn, .row-sel .pv, .row-sel .pi { background: #3399ff; color: #fff; }

.seq-body { flex: 1; position: relative; display: flex; margin: 2px 1px; background: #f0f0f0; border-top: 2px solid #909090; min-height: 0; }
.tree-line { position: absolute; left: 9px; top: 2px; width: 6px; height: 295px; border-left: 1px dotted #000; border-bottom: 1px dotted #000; }
.seq-list { width: 116px; flex: none; display: flex; flex-direction: column; padding-top: 1px; }
.seq-row { height: 66px; flex: none; display: flex; align-items: center; position: relative; }
.plus { width: 11px; height: 11px; flex: none; margin: 0 0 5px 3px; background: linear-gradient(#000, #000) center / 7px 1px no-repeat, linear-gradient(#000, #000) center / 1px 7px no-repeat, #fff; border: 1px solid #000; position: relative; }
.noplus { width: 11px; height: 11px; flex: none; margin-left: 3px; }
.thumb { width: 99px; height: 66px; margin-left: 2px; flex: none; position: relative; background: #484848; border: 1px solid #fff; border-bottom: 2px solid #808080; display: flex; }
.t-strip { width: 16px; flex: none; position: relative; }
.t-gap { width: 2px; flex: none; background: #fff; border-right: 1px solid #000; }
.t-bar { position: absolute; top: 0; bottom: 0; }
.tc-r { background: #ed1c24; } .tc-g { background: #00ff00; } .tc-b { background: #0000ff; } .tc-y { background: #ffff00; } .tc-c { background: #00ffff; }
.t-b1 { left: 18px; width: 15px; } .t-b2 { left: 31px; width: 13px; } .t-b3 { left: 43px; width: 13px; } .t-b4 { left: 55px; width: 13px; } .t-b5 { left: 68px; width: 13px; }
.thumb::after { content: ""; position: absolute; right: 0; top: 0; bottom: 0; width: 16px; background: #000; }
.t-label { position: absolute; right: 1px; bottom: 1px; z-index: 1; color: #fff; font-size: 11px; line-height: 12px; }
.t-sc { position: absolute; left: 0; top: 0; width: 16px; height: 16px; background: #fff; display: block; }
.t-sc svg { width: 16px; height: 16px; display: block; }
.seq-scroll { flex: 1; position: relative; display: flex; flex-direction: column; justify-content: space-between; align-items: center; padding: 8px 0 6px; border-left: 1px solid #e8e8e8; }
.arr-up { border-left: 4px solid transparent; border-right: 4px solid transparent; border-bottom: 4px solid #a0a0a0; }
.arr-down { border-left: 4px solid transparent; border-right: 4px solid transparent; border-top: 4px solid #a0a0a0; }

.img-tools { height: 31px; flex: none; display: flex; align-items: center; gap: 1px; padding-left: 2px; border-bottom: 2px solid #909090; }
.img-view { height: 106px; flex: none; margin: 4px 0 0 3px; width: 222px; background: #000; display: flex; padding-left: 1px; position: relative; border: 1px solid #888; border-width: 0 1px; }
.iv { height: 105px; flex: none; }
.iv1 { width: 21px; background: #a01010; } .iv2 { width: 21px; background: #00b000; } .iv3 { width: 21px; background: #0000b0; } .iv4 { width: 20px; background: #b8b000; } .iv5 { width: 22px; background: #00b4b4; }
.iv-mark { position: absolute; left: 186px; top: 0; bottom: 0; width: 1px; background: #e0e0e0; }
.img-slider { width: 158px; height: 8px; flex: none; margin: 10px 0 0 7px; border: 1px solid #808080; background: #fff; }
```
FILE: app.js
```js
(function () {
  var NS = 118.8;
  var xs = [176, 295, 414, 532, 651, 771];

  function rect(x, y, w, h, c) {
    return '<rect x="' + x + '" y="' + y + '" width="' + w + '" height="' + h + '" fill="' + c + '"/>';
  }
  function line(x1, y1, x2, y2, c, dash) {
    return '<line x1="' + x1 + '" y1="' + y1 + '" x2="' + x2 + '" y2="' + y2 + '" stroke="' + c + '" stroke-width="1"' +
      (dash ? ' stroke-dasharray="' + dash + '"' : '') + '/>';
  }

  var segs = [
    { x: 178, c: '#ee1c24', d: '#7a0e12', w: [2, 2, 3, 2, 2] },
    { x: 297, c: '#00ff00', d: '#008000', w: [2, 2, 3, 2, 2] },
    { x: 416, c: '#0000ff', d: '#000080', w: [3, 3, 2, 3, 3] },
    { x: 534, c: '#ffff00', d: '#808000', w: [2, 2, 2, 2, 2] },
    { x: 652, c: '#00ffff', d: '#008080', w: [2, 2, 2, 2, 2] }
  ];
  var tops = [302, 293, 288, 302, 296, 302, 288, 302, 300, 288];
  var bots = [882, 866, 882, 857, 882, 882, 871, 882, 861, 882];

  var s = '';
  segs.forEach(function (seg) {
    for (var k = 0; k < 31; k++) {
      var x = Math.round(seg.x + k * 3.8);
      var t = tops[k % 10];
      var b = bots[(k + 3) % 10];
      s += rect(x, t, seg.w[k % 5], b - t, seg.c);
    }
    // dim short stitches in the gaps at the top and bottom edge
    for (var j = 2; j < 31; j += 5) {
      var fx = Math.round(seg.x + j * 3.8 + 2);
      s += rect(fx, 298 + (j % 3) * 4, 1, 24, seg.d);
      s += rect(fx, 850 - (j % 3) * 4, 1, 20, seg.d);
    }
  });
  s += rect(176, 288, 2, 8, '#ee1c24');

  // guides
  xs.forEach(function (x, i) {
    if (i >= 2) s += line(x + 0.5, 145, x + 0.5, 986, '#0000e0');
    s += line(x + 0.5, 145, x + 0.5, 986, '#ffffff', i === 0 ? '2 2' : '3 2');
  });
  s += line(20, 287.5, 1271, 287.5, '#ffffff', '2 2');

  // end-of-design barrier
  s += rect(755, 867, 32, 6, '#c8c8c8') + rect(756, 868, 30, 4, '#ffff00');
  for (var h = 756; h < 786; h += 8) {
    s += '<path d="M' + h + ' 868h3l3 4h-3z" fill="#000"/>';
  }
  s += '<path d="M759 873l-3 13M762 873l2 13M781 873l-3 13M785 873l2 13M756 886h3M761 886h3M778 886h3M784 886h3" stroke="#c0c0c0" fill="none"/>';

  var cv = document.getElementById('canvas');
  cv.setAttribute('shape-rendering', 'crispEdges');
  cv.innerHTML = s;

  // horizontal ruler
  var r = '';
  var step = NS / 10;
  for (var u = -2; u <= 9; u++) {
    var ux = 177 + u * NS;
    for (var t = 0; t < 10; t++) {
      var tx = Math.round(ux + t * step);
      if (tx < 20) continue;
      if (t === 0) {
        r += rect(tx, 129, 1, 2, '#800030') + rect(tx, 141, 1, 2, '#800030');
        var lbl = u < 0 ? '\u2212' + (-u) : String(u);
        if (u >= -1) r += '<text x="' + tx + '" y="141" font-family="Liberation Sans" font-size="12" fill="#000090" text-anchor="middle">' + lbl + '</text>';
      } else if (t === 5) {
        r += rect(tx, 133, 1, 6, '#800030');
      } else {
        r += rect(tx, 135, 1, 2, '#800030');
      }
    }
  }
  r += rect(20, 127, 1251, 2, '#f8f8f8') + rect(21, 129, 1, 14, '#000060') + rect(81, 129, 1, 14, '#000') + rect(20, 143, 1251, 2, '#f0f0f0');
  var rh = document.getElementById('rulerH');
  rh.setAttribute('shape-rendering', 'crispEdges');
  rh.innerHTML = r;

  // vertical ruler
  var v = rect(0, 145, 3, 841, '#f0f0f0') + rect(2, 145, 1, 841, '#909090') + rect(18, 145, 2, 841, '#f0f0f0');
  for (var m = -1; m <= 6; m++) {
    var uy = 288 + m * NS;
    for (var q = 0; q < 10; q++) {
      var ty = Math.round(uy + q * step);
      if (ty < 150 || ty > 986) continue;
      if (q === 0) {
        v += rect(4, ty, 2, 1, '#800030') + rect(16, ty, 2, 1, '#800030');
        v += '<text x="13" y="' + (ty + 5) + '" font-family="Liberation Sans" font-size="12" fill="#000090" text-anchor="middle">' + Math.abs(m) + '</text>';
      } else if (q === 5) {
        v += rect(8, ty, 6, 1, '#800030');
      } else {
        v += rect(10, ty, 2, 1, '#800030');
      }
    }
  }
  v += rect(4, 313, 14, 1, '#000');
  var rv = document.getElementById('rulerV');
  rv.setAttribute('shape-rendering', 'crispEdges');
  rv.innerHTML = v;
})();
```
